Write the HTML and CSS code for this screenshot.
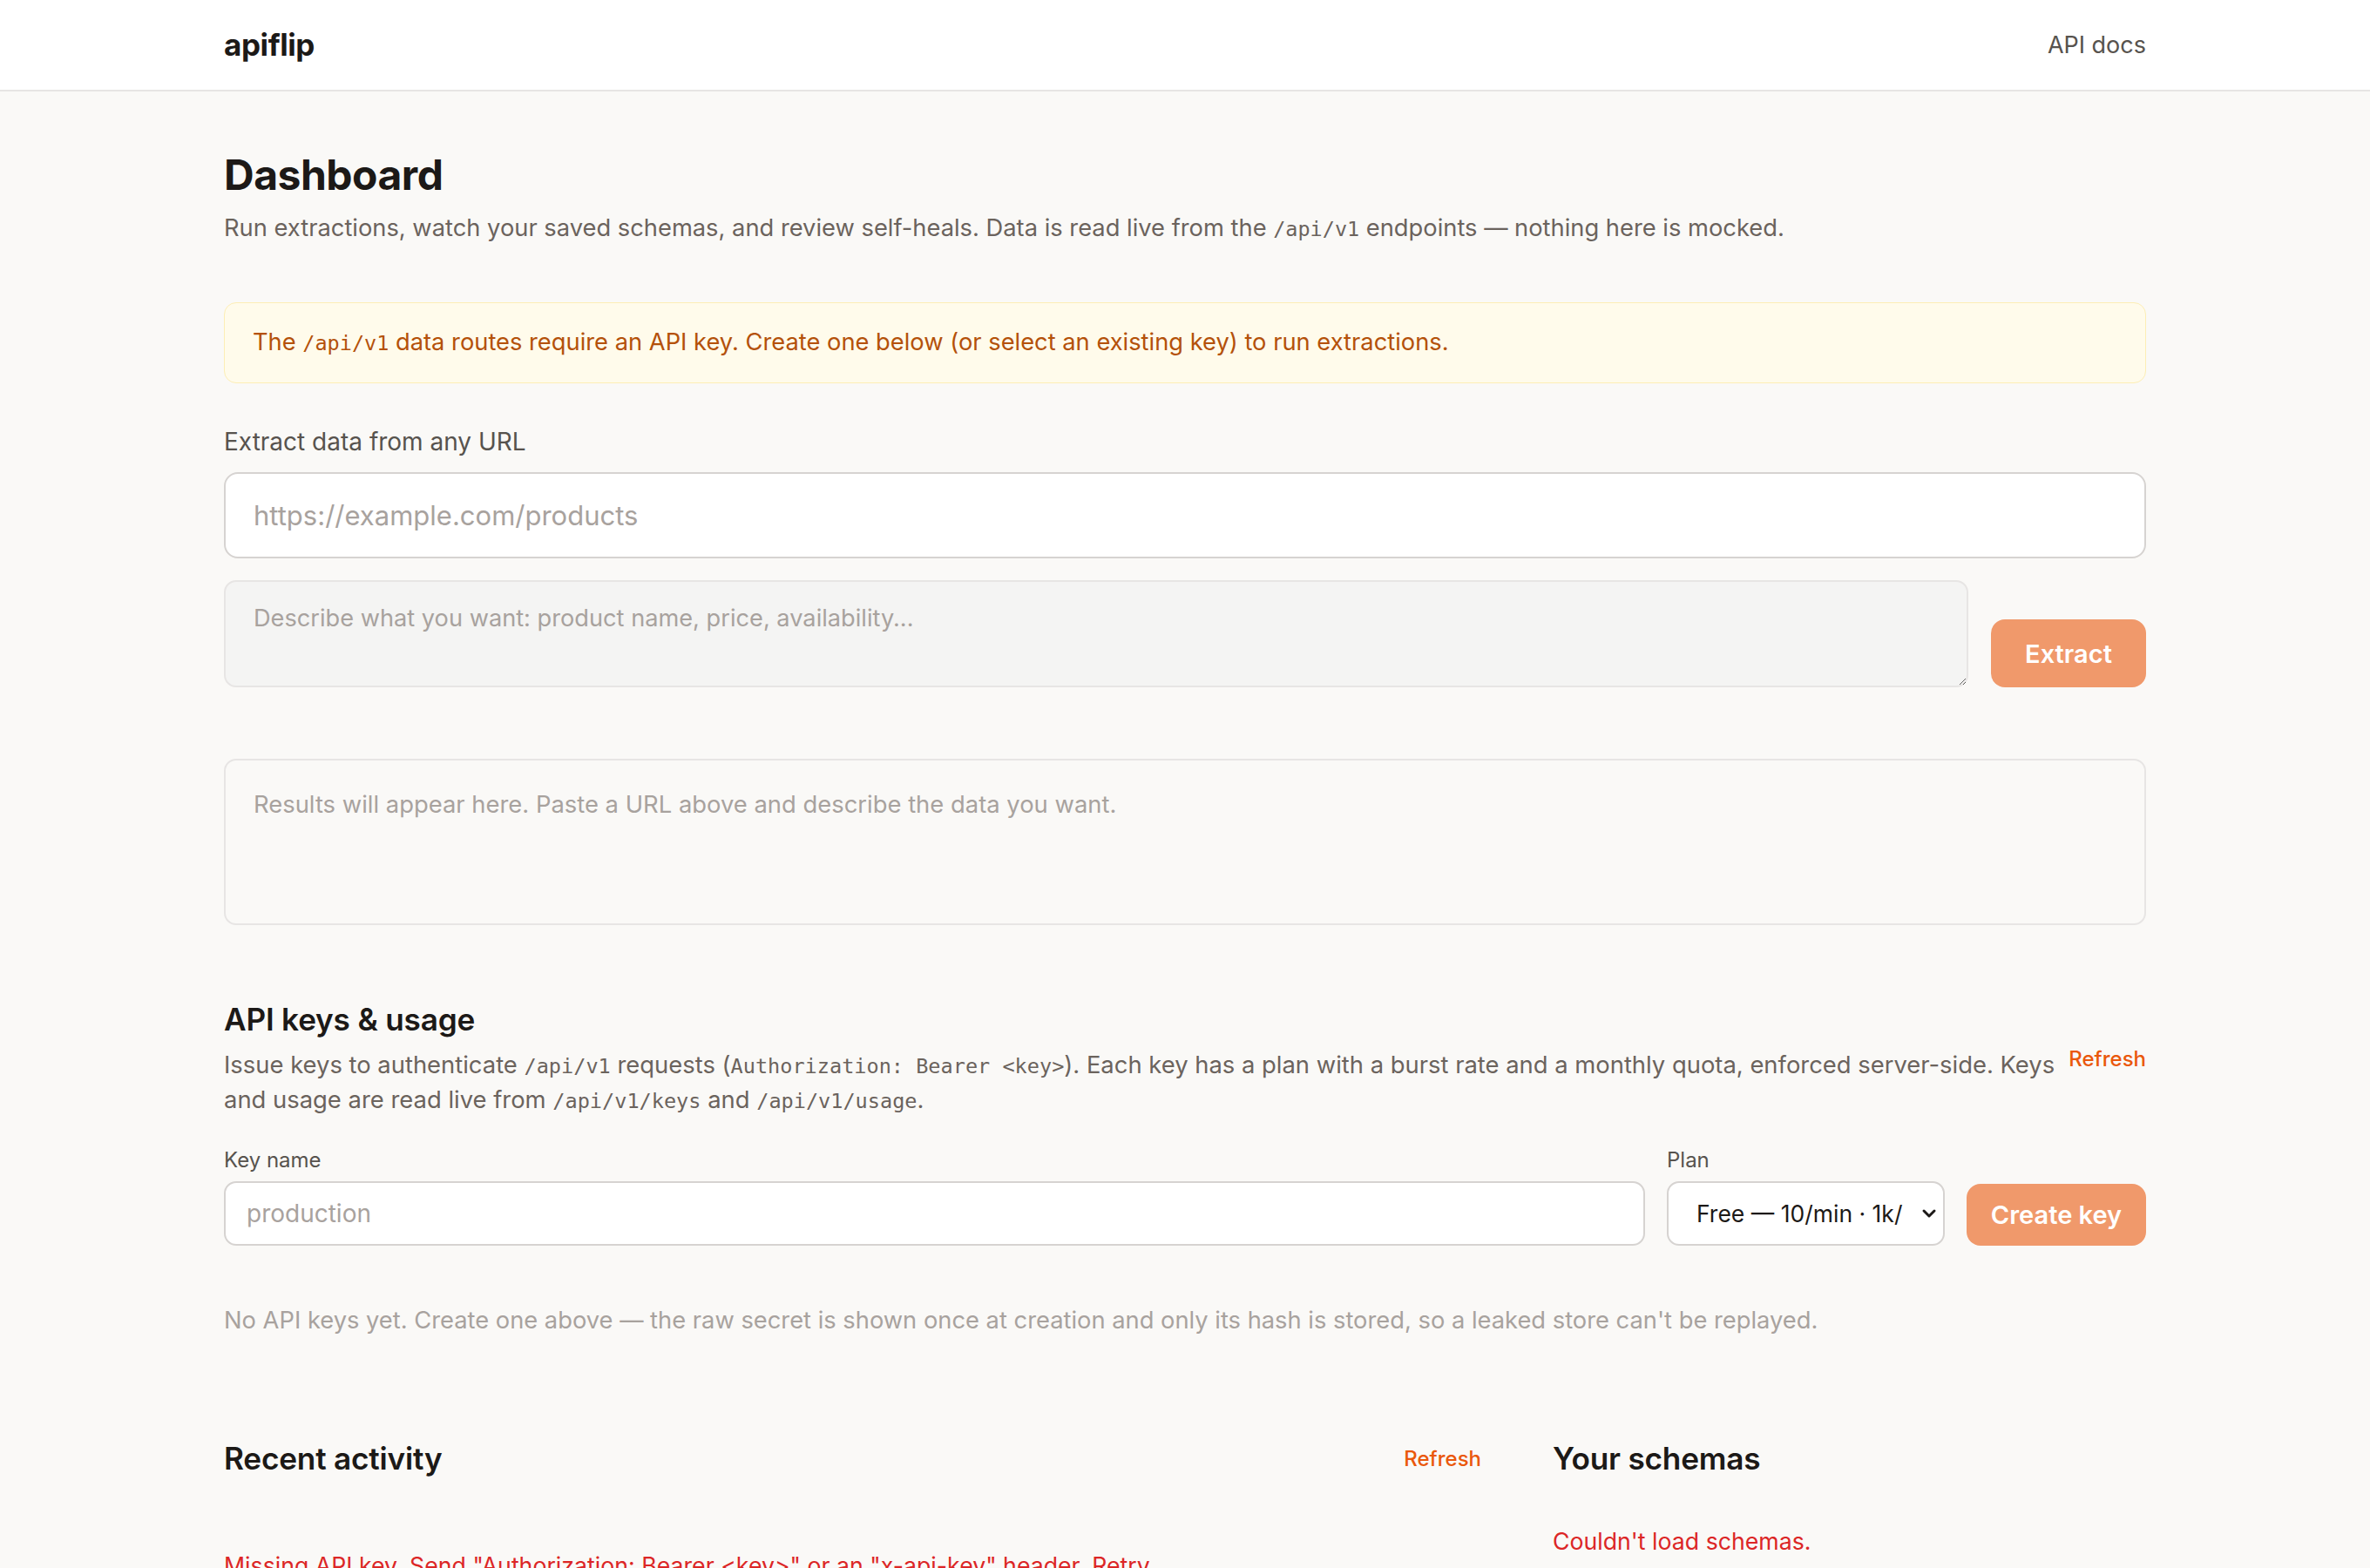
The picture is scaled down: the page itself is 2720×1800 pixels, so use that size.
FILE: index.html
```html
<!DOCTYPE html>
<html lang="en">
<head>
    <meta charset="UTF-8">
    <meta name="viewport" content="width=device-width, initial-scale=1.0">
    <title>Dashboard | apiflip</title>
    <link rel="stylesheet" href="styles.css">
</head>
<body>
    <header class="topbar">
        <div class="topbar-inner">
            <a href="index.html" class="brand">apiflip</a>
            <a href="docs.html" class="nav-link">API docs</a>
        </div>
    </header>

    <main class="page">
        <h1>Dashboard</h1>
        <p class="lead">Run extractions, watch your saved schemas, and review self-heals. Data is read live from the <code>/api/v1</code> endpoints — nothing here is mocked.</p>

        <div class="notice">The <code>/api/v1</code> data routes require an API key. Create one below (or select an existing key) to run extractions.</div>

        <section class="extract">
            <label class="field-label" for="url">Extract data from any URL</label>
            <input type="text" id="url" class="url-input" placeholder="https://example.com/products">

            <div class="prompt-row">
                <textarea id="prompt" class="prompt-input" placeholder="Describe what you want: product name, price, availability..."></textarea>
                <button class="btn-primary extract-btn">Extract</button>
            </div>

            <div class="results">Results will appear here. Paste a URL above and describe the data you want.</div>
        </section>

        <section class="keys">
            <div class="section-head">
                <div>
                    <h2>API keys &amp; usage</h2>
                    <p class="section-desc">Issue keys to authenticate <code>/api/v1</code> requests (<code>Authorization: Bearer &lt;key&gt;</code>). Each key has a plan with a burst rate and a monthly quota, enforced server-side. Keys and usage are read live from <code>/api/v1/keys</code> and <code>/api/v1/usage</code>.</p>
                </div>
                <button class="link-btn">Refresh</button>
            </div>

            <div class="key-form">
                <div class="field">
                    <label class="small-label" for="key-name">Key name</label>
                    <input type="text" id="key-name" class="text-input" placeholder="production">
                </div>
                <div class="field">
                    <label class="small-label" for="plan">Plan</label>
                    <div class="select-wrap">
                        <select id="plan" class="plan-select">
                            <option>Free — 10/min · 1k/month</option>
                            <option>Pro — 60/min · 50k/month</option>
                            <option>Scale — 300/min · 1M/month</option>
                        </select>
                        <svg class="select-caret" width="18" height="12" viewBox="0 0 18 12" aria-hidden="true">
                            <path d="M3 3 L9 9 L15 3" fill="none" stroke="#1c1917" stroke-width="3" stroke-linecap="round" stroke-linejoin="round"/>
                        </svg>
                    </div>
                </div>
                <button class="btn-primary create-btn">Create key</button>
            </div>

            <p class="empty-note">No API keys yet. Create one above — the raw secret is shown once at creation and only its hash is stored, so a leaked store can't be replayed.</p>
        </section>

        <div class="lower-grid">
            <section class="activity">
                <div class="section-head">
                    <h2>Recent activity</h2>
                    <button class="link-btn">Refresh</button>
                </div>
                <p class="error activity-error">Missing API key. Send "Authorization: Bearer &lt;key&gt;" or an "x-api-key" header. <a href="#" class="retry">Retry</a></p>
            </section>

            <section class="schemas">
                <div class="section-head">
                    <h2>Your schemas</h2>
                </div>
                <p class="error schemas-error">Couldn't load schemas.</p>
            </section>
        </div>
    </main>
</body>
</html>
```

FILE: styles.css
```css
:root {
    --page-bg: #faf9f7;
    --text: #1c1917;
    --muted: #6b635d;
    --label: #57534e;
    --faint: #a8a29e;
    --border: #d6d3d1;
    --border-soft: #e7e5e4;
    --accent: #f0996b;
    --link: #ea580c;
    --error: #dc2626;
}
* {
    box-sizing: border-box;
}
body {
    margin: 0;
    background: var(--page-bg);
    color: var(--text);
    font-family: Inter, "Noto Sans", sans-serif;
    font-size: 28px;
    line-height: 1.45;
}
code {
    font-family: "DejaVu Sans Mono", monospace;
    font-size: 0.86em;
    line-height: 1;
}
a {
    text-decoration: none;
}

/* top bar */
.topbar {
    background: #fff;
    border-bottom: 2px solid #e7e5e4;
}
.topbar-inner {
    max-width: 2206px;
    height: 103px;
    margin: 0 auto;
    display: flex;
    align-items: center;
    justify-content: space-between;
}
.brand {
    color: var(--text);
    font-size: 35px;
    font-weight: 700;
    letter-spacing: -0.4px;
}
.nav-link {
    color: var(--label);
    font-size: 27px;
}

/* page */
.page {
    max-width: 2206px;
    margin: 0 auto;
    padding: 67px 0 80px;
}
h1 {
    margin: 0;
    font-size: 48px;
    line-height: 58px;
    font-weight: 700;
    letter-spacing: -0.5px;
}
.lead {
    margin: 10px 0 0;
    color: var(--muted);
    font-size: 27.3px;
    line-height: 44px;
}
.notice {
    margin-top: 63px;
    padding: 25px 32px 26px;
    background: #fffbeb;
    border: 1px solid #fdeeb5;
    border-radius: 14px;
    color: #b4510a;
    font-size: 27.3px;
    line-height: 40px;
}

/* extraction */
.extract {
    margin-top: 47px;
}
.field-label {
    display: block;
    color: var(--label);
    font-size: 28px;
    line-height: 40px;
    margin-bottom: 15px;
}
.url-input {
    display: block;
    width: 100%;
    height: 99px;
    padding: 0 32px;
    background: #fff;
    border: 2px solid var(--border);
    border-radius: 16px;
    font-family: inherit;
    font-size: 31px;
    color: var(--text);
    outline: none;
}
.url-input::placeholder,
.text-input::placeholder,
.prompt-input::placeholder {
    color: var(--faint);
}
.prompt-row {
    margin-top: 25px;
    display: flex;
    align-items: flex-end;
    gap: 26px;
}
.prompt-input {
    flex: 1;
    height: 123px;
    padding: 22px 32px;
    background: #f4f4f3;
    border: 2px solid var(--border-soft);
    border-radius: 14px;
    font-family: inherit;
    font-size: 27.2px;
    line-height: 40px;
    color: var(--text);
    outline: none;
}
.btn-primary {
    background: var(--accent);
    color: #fff;
    border: none;
    border-radius: 16px;
    font-family: inherit;
    font-size: 29px;
    font-weight: 600;
    cursor: pointer;
}
.extract-btn {
    width: 178px;
    height: 78px;
}
.results {
    margin-top: 82px;
    min-height: 191px;
    padding: 30px 32px;
    border: 2px solid var(--border-soft);
    border-radius: 14px;
    color: var(--faint);
    font-size: 27.4px;
    line-height: 40px;
}

/* keys */
.keys {
    margin-top: 86px;
}
.section-head {
    display: flex;
    align-items: center;
    justify-content: space-between;
    gap: 12px;
}
h2 {
    margin: 0;
    font-size: 35.2px;
    line-height: 44px;
    font-weight: 600;
    letter-spacing: -0.2px;
}
.section-desc {
    margin: 10px 0 0;
    color: var(--muted);
    font-size: 27.4px;
    line-height: 40px;
}
.link-btn {
    flex-shrink: 0;
    background: none;
    border: none;
    padding: 0;
    color: var(--link);
    font-family: inherit;
    font-size: 24px;
    font-weight: 500;
    cursor: pointer;
}
.key-form {
    margin-top: 33px;
    display: grid;
    grid-template-columns: 1fr 319px 206px;
    gap: 25px;
    align-items: end;
}
.small-label {
    display: block;
    color: var(--label);
    font-size: 24px;
    line-height: 34px;
    margin-bottom: 7px;
}
.text-input,
.plan-select {
    display: block;
    width: 100%;
    height: 74px;
    padding: 0 24px;
    background: #fff;
    border: 2px solid var(--border);
    border-radius: 14px;
    font-family: inherit;
    font-size: 28px;
    color: var(--text);
    outline: none;
}
.select-wrap {
    position: relative;
}
.plan-select {
    appearance: none;
    -webkit-appearance: none;
    padding: 0 46px 0 32px;
    font-size: 26.5px;
    text-overflow: clip;
}
.select-caret {
    position: absolute;
    right: 9px;
    top: 31px;
    pointer-events: none;
}
.create-btn {
    height: 71px;
}
.empty-note {
    margin: 66px 0 0;
    color: var(--faint);
    font-size: 27.3px;
    line-height: 40px;
}

/* activity + schemas */
.lower-grid {
    margin-top: 116px;
    display: grid;
    grid-template-columns: 1fr 681px;
    gap: 82px;
    align-items: start;
}
.error {
    color: var(--error);
    font-size: 26.7px;
    line-height: 40px;
}
.activity-error {
    margin: 81px 0 0;
}
.schemas-error {
    margin: 53px 0 0;
}
.retry {
    color: var(--error);
    text-decoration: underline;
}
```
